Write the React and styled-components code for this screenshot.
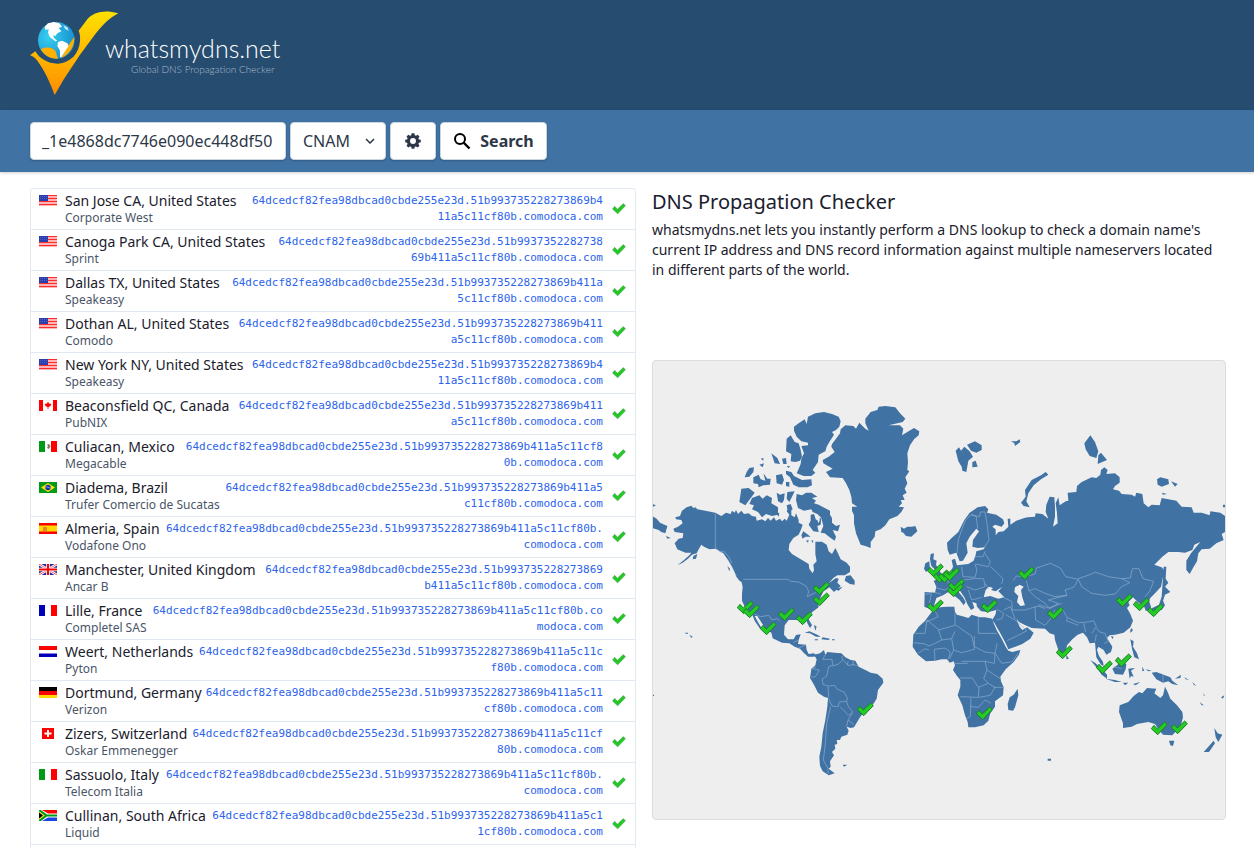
import React, { useState } from 'react';
import styled, { createGlobalStyle } from 'styled-components';

const GlobalStyle = createGlobalStyle`
    *, *::before, *::after { box-sizing: border-box; }
    body {
        margin: 0;
        background: #fff;
        color: #1a202c;
        font-family: "Noto Sans", "Open Sans", sans-serif;
    }
`;

const Page = styled.div`
    display: flex;
    flex-direction: column;
    height: 100vh;
    overflow: hidden;
`;

const Header = styled.header`
    display: flex;
    background: #264c70;
    padding: 11px 30px 15px;
`;

const Brand = styled.a`
    display: flex;
    align-items: flex-start;
    color: #fff;
    text-decoration: none;
    font-family: Lato, sans-serif;
    font-weight: 300;
`;

const BrandText = styled.span`
    display: flex;
    flex-direction: column;
    align-items: flex-end;
    margin: 22px 0 0 -13px;
`;

const BrandName = styled.span`
    font-size: 25px;
    line-height: 30px;
`;

const BrandSub = styled.span`
    font-size: 10px;
    line-height: 12px;
    padding-right: 6px;
    color: #a9bacb;
`;

const Toolbar = styled.form`
    display: flex;
    gap: 4px;
    padding: 12px 30px;
    background: #4072a4;
    box-shadow: 0 1px 3px rgba(0, 0, 0, 0.2);
`;

const field = `
    height: 38px;
    border: 1px solid #cbd5e0;
    border-radius: 4px;
    background: #fff;
    color: #2d3748;
    font-family: inherit;
    font-size: 16px;
    box-shadow: 0 1px 2px rgba(0, 0, 0, 0.2);
`;

const DomainInput = styled.input`
    ${field}
    width: 256px;
    padding: 0 11px;
`;

const SelectBox = styled.div`
    display: grid;
    align-items: center;

    & > * { grid-area: 1 / 1; }
    svg {
        justify-self: end;
        margin-right: 11px;
        pointer-events: none;
    }
`;

const TypeSelect = styled.select`
    ${field}
    width: 96px;
    padding: 0 12px;
    appearance: none;
`;

const Button = styled.button`
    ${field}
    display: flex;
    align-items: center;
    justify-content: center;
    gap: 9px;
    width: ${(props) => props.$width}px;
    padding: 0;
    font-weight: 700;
`;

const Content = styled.main`
    flex: 1;
    min-height: 0;
    display: grid;
    grid-template-columns: minmax(0, 606fr) minmax(0, 574fr);
    gap: 16px;
    padding: 16px 28px 0 30px;
`;

const Results = styled.section`
    border: 1px solid #e2e8f0;
    border-bottom: 0;
    border-radius: 4px 4px 0 0;
    overflow: hidden;
`;

const Table = styled.table`
    display: block;
    tbody { display: block; }
`;

const Tr = styled.tr`
    display: flex;
    padding: 4px 8px;
    border-bottom: 1px solid #e2e8f0;
`;

const FlagCell = styled.td`
    padding: 2px 0 0;
    width: 26px;
    svg { display: block; }
`;

const PlaceCell = styled.td`
    padding: 0;
    flex: 1;
    white-space: nowrap;
`;

const City = styled.div`
    font-size: 14px;
    line-height: 16px;
`;

const Provider = styled.div`
    font-size: 12px;
    line-height: 18px;
    margin-bottom: -2px;
    color: #4a5568;
`;

const ValueCell = styled.td`
    padding: 0;
    text-align: right;
    white-space: nowrap;
    font-family: "DejaVu Sans Mono", monospace;
    font-size: 11px;
    line-height: 16px;
    color: #2b63eb;
`;

const StatusCell = styled.td`
    display: flex;
    align-items: center;
    padding: 0 1px 0 9px;
`;

const Side = styled.section`
    min-width: 0;
`;

const Title = styled.h1`
    margin: 0;
    font-size: 20px;
    line-height: 28px;
    font-weight: 400;
`;

const Intro = styled.p`
    margin: 4px 0 80px;
    font-size: 14px;
    line-height: 20px;
`;

const MapBox = styled.div`
    border: 1px solid #dcdcdc;
    border-radius: 4px;
    background: #eee;
    overflow: hidden;
    svg { display: block; width: 100%; }
`;

const RECORD = '64dcedcf82fea98dbcad0cbde255e23d.51b993735228273869b411a5c11cf80b.comodoca.com';

// tail: how many characters of the record go on the second line
const servers = [
    { flag: 'us', city: 'San Jose CA, United States', provider: 'Corporate West', tail: 25 },
    { flag: 'us', city: 'Canoga Park CA, United States', provider: 'Sprint', tail: 29 },
    { flag: 'us', city: 'Dallas TX, United States', provider: 'Speakeasy', tail: 22 },
    { flag: 'us', city: 'Dothan AL, United States', provider: 'Comodo', tail: 23 },
    { flag: 'us', city: 'New York NY, United States', provider: 'Speakeasy', tail: 25 },
    { flag: 'ca', city: 'Beaconsfield QC, Canada', provider: 'PubNIX', tail: 23 },
    { flag: 'mx', city: 'Culiacan, Mexico', provider: 'Megacable', tail: 15 },
    { flag: 'br', city: 'Diadema, Brazil', provider: 'Trufer Comercio de Sucatas', tail: 21 },
    { flag: 'es', city: 'Almeria, Spain', provider: 'Vodafone Ono', tail: 12 },
    { flag: 'gb', city: 'Manchester, United Kingdom', provider: 'Ancar B', tail: 27 },
    { flag: 'fr', city: 'Lille, France', provider: 'Completel SAS', tail: 10 },
    { flag: 'nl', city: 'Weert, Netherlands', provider: 'Pyton', tail: 17 },
    { flag: 'de', city: 'Dortmund, Germany', provider: 'Verizon', tail: 18 },
    { flag: 'ch', city: 'Zizers, Switzerland', provider: 'Oskar Emmenegger', tail: 16 },
    { flag: 'it', city: 'Sassuolo, Italy', provider: 'Telecom Italia', tail: 12 },
    { flag: 'za', city: 'Cullinan, South Africa', provider: 'Liquid', tail: 19 },
];

const flags = {
    us: (
        <>
            <rect width="18" height="11" fill="#ffb3b3" />
            <path d="M0 .5H18M0 3.5H18M0 6.5H18M0 9.5H18" stroke="#ff2d2d" strokeWidth="1.2" />
            <rect width="9" height="6" fill="#2b3cab" />
            <path d="M1 1.5H9M1 3.5H9" stroke="#6f7bd0" strokeWidth=".6" strokeDasharray="1 1" />
        </>
    ),
    ca: (
        <>
            <rect width="18" height="11" fill="#fff" />
            <path d="M4 .2H14M4 10.800H14" stroke="#ddd" strokeWidth=".5" />
            <path d="M0 0H4V11H0ZM14 0H18V11H14ZM9 1.5L10 3.5L12.5 4L11 6.5L9.4 7V9H8.6V7L7 6.5L5.500 4L8 3.500Z" fill="#f00" />
        </>
    ),
    mx: (
        <>
            <rect width="18" height="11" fill="#fff" />
            <rect width="6" height="11" fill="#009a17" />
            <rect x="12" width="6" height="11" fill="#f00" />
            <path d="M8 3.500L10 3L11.500 5L10 8L8 7L9 5Z" fill="#83795e" />
        </>
    ),
    br: (
        <>
            <rect width="18" height="11" fill="#009a17" />
            <path d="M9 1L16 5.500L9 10L2 5.500Z" fill="#ffe000" />
            <circle cx="9" cy="5.500" r="2.700" fill="#1130b0" />
            <path d="M6.500 5Q9 4.500 11.500 6.300" stroke="#cfe0ff" strokeWidth=".6" fill="none" />
        </>
    ),
    es: (
        <>
            <rect width="18" height="11" fill="#f00" />
            <rect y="2.500" width="18" height="6" fill="#ffd800" />
            <rect x="4" y="4" width="4" height="4" fill="#e58a2a" />
        </>
    ),
    gb: (
        <>
            <rect width="18" height="11" fill="#1a2f9c" />
            <path d="M0 0L18 11M18 0L0 11" stroke="#fff" strokeWidth="2.600" />
            <path d="M0 0L18 11M18 0L0 11" stroke="#f33" strokeWidth=".8" />
            <path d="M9 0V11M0 5.500H18" stroke="#fff" strokeWidth="3.600" />
            <path d="M9 0V11M0 5.500H18" stroke="#f00" strokeWidth="2" />
        </>
    ),
    fr: (
        <>
            <rect width="18" height="11" fill="#fff" />
            <rect width="6" height="11" fill="#0000b8" />
            <rect x="12" width="6" height="11" fill="#f00" />
        </>
    ),
    nl: (
        <>
            <rect width="18" height="11" fill="#fff" />
            <rect width="18" height="4" fill="#f00" />
            <rect y="7.500" width="18" height="3.500" fill="#0000b8" />
        </>
    ),
    de: (
        <>
            <rect width="18" height="4" fill="#000" />
            <rect y="4" width="18" height="4" fill="#f00" />
            <rect y="8" width="18" height="3" fill="#ffd800" />
        </>
    ),
    ch: (
        <>
            <rect x="3" width="12" height="11" fill="#f00" />
            <path d="M9 2V9M5.500 5.500H12.500" stroke="#fff" strokeWidth="2" />
        </>
    ),
    it: (
        <>
            <rect width="18" height="11" fill="#fff" />
            <rect width="6" height="11" fill="#009a17" />
            <rect x="12" width="6" height="11" fill="#f00" />
        </>
    ),
    za: (
        <>
            <rect width="18" height="11" fill="#fff" />
            <path d="M3 0H18V3.600H9Z" fill="#f00" />
            <path d="M3 11H18V7.400H9Z" fill="#1b45e0" />
            <path d="M0 0L7.500 5.500L0 11M7 5.500H18" stroke="#009a17" strokeWidth="2.200" fill="none" />
            <path d="M0 1.500L5.500 5.500L0 9.500Z" fill="#ffd800" />
            <path d="M0 2.500L4 5.500L0 8.500Z" fill="#000" />
        </>
    ),
};

const Flag = ({ code }) => (
    <svg width="18" height="11" viewBox="0 0 18 11" aria-label={code}>
        {flags[code]}
    </svg>
);

const CHECK = 'M-23 2L-15 -8L-5 3L17 -18L25 -10L-4 20Z';

const CheckIcon = () => (
    <svg width="14" height="12" viewBox="-25 -20 52 44" aria-label="resolved">
        <path d={CHECK} fill="#22c922" stroke="#4f9a5a" strokeWidth="2" strokeLinejoin="round" />
    </svg>
);

const markers = [
    [745, 607], [751, 611], [768, 628], [786, 614], [804, 618], [821, 588], [821, 599],
    [865, 709], [935, 570], [941, 576], [946, 576], [951, 574], [956, 585], [955, 590],
    [935, 606], [989, 606], [1026, 573], [1055, 613], [1064, 652], [984, 713],
    [1124, 600], [1141, 604], [1155, 610], [1123, 660], [1104, 667], [1159, 728], [1179, 727],
];

const WorldMap = () => (
    <svg viewBox="0 0 1716 1374" role="img" aria-label="World map of DNS servers">
        {/* north america, greenland, iceland, british isles */}
        <g transform="translate(-3 87)" fill="#4072a4">
            <path d="M70 382L84 378L90 362L104 352L118 347L124 354L130 352L136 358L160 362L190 368L208 378L222 368L236 372L240 362L248 368L252 360L258 372L268 362L276 372L290 370L300 378L312 380L314 392L330 388L340 394L348 384L356 392L366 382L372 392L384 386L390 394L398 386L404 392L412 374L404 364L410 352L418 358L418 376L428 382L432 370L440 390L440 398L452 404L448 416L440 434L424 444L412 462L410 480L420 492L440 504L460 516L470 522L472 536L482 550L486 540L484 524L494 514L490 492L490 472L490 455L510 455L524 464L530 484L540 492L550 474L558 490L566 508L584 518L594 530L594 546L578 556L556 556L544 564L530 580L552 564L560 566L556 578L566 588L546 606L532 592L524 598L514 604L506 622L498 640L500 652L484 664L470 676L470 688L480 706L474 714L466 700L462 686L440 690L410 690L398 706L396 734L408 748L425 748L432 735L446 733L440 750L438 762L462 764L464 780L470 792L486 790L494 798L484 800L468 800L455 788L444 776L428 770L412 760L390 758L362 745L358 728L340 716L326 694L316 678L308 678L320 700L330 716L324 716L308 692L300 672L280 654L270 632L270 612L272 590L268 574L252 556L240 530L228 510L214 490L190 476L172 478L156 470L148 464L140 478L134 490L120 494L108 506L92 518L76 526L96 510L112 496L118 488L100 488L76 478L68 460L80 446L92 444L94 430L68 426L64 416L78 410L92 400L88 390L72 388Z" />
            <path d="M0 378L14 386L24 398L46 408L40 430L28 426L20 420L0 414ZM0 342L12 346L0 352ZM42 438L56 444L46 446ZM124 498L136 492L132 506L122 508ZM226 528L234 536L232 544ZM250 556L262 560L278 574L276 580L262 572Z" />
            <path d="M540 162L552 146L564 130L566 118L580 106L604 108L612 116L622 98L640 116L650 122L640 100L640 86L656 66L676 60L680 50L700 48L730 52L744 70L760 86L752 96L710 106L744 106L754 116L750 136L766 126L786 114L802 124L800 136L786 148L774 166L766 190L768 216L766 240L772 244L760 262L766 280L758 296L764 308L752 316L758 330L746 330L750 340L740 350L756 352L748 366L736 378L712 388L700 406L686 418L670 424L668 440L656 456L656 474L640 468L626 464L612 430L606 400L606 376L600 362L600 350L616 350L600 340L598 320L592 300L582 280L572 264L534 262L522 246L542 236L514 220L512 210L530 200L548 186L538 170Z" />
            <path d="M426 110L440 100L458 88L464 102L468 80L490 70L516 66L540 72L560 80L566 94L562 110L552 120L540 126L546 134L532 156L524 170L520 184L500 194L498 216L482 240L490 248L478 258L455 258L434 250L440 236L446 222L448 206L456 190L448 168L468 166L468 158L448 154L434 140L426 122Z" />
            <path d="M404 146L416 136L428 156L440 160L446 180L450 200L444 212L430 216L416 214L418 192L402 184Z" />
            <path d="M402 242L418 246L426 258L450 270L478 268L480 286L466 292L440 292L424 284L414 262L402 252ZM372 256L390 252L396 270L390 284L374 280ZM358 190L376 204L384 222L368 220ZM390 206L402 204L404 222L394 222ZM402 276L412 276L412 290L402 288ZM322 224L336 220L332 232ZM326 206L334 204L334 212ZM404 228L414 228L410 234Z" />
            <path d="M278 262L284 246L292 234L306 232L304 246L292 260ZM304 262L320 254L326 268L340 272L334 250L346 266L356 266L354 284L334 286L320 292L318 282L304 280ZM268 296L290 294L308 308L298 322L280 346L262 336Z" />
            <path d="M300 324L322 316L332 326L344 316L360 324L358 340L378 352L378 374L360 378L342 372L330 382L318 366L300 358L306 346L292 342ZM374 308L384 314L398 310L396 330L390 340L378 334ZM406 306L428 304L420 320L412 336L404 326ZM404 346L416 342L422 358L408 366ZM372 370L382 368L380 380Z" />
            <path d="M434 312L450 316L462 308L478 308L496 320L480 324L492 332L486 340L500 344L514 352L534 362L534 374L540 384L540 398L552 408L564 404L558 424L542 420L552 440L548 452L536 444L518 430L506 428L514 408L508 384L496 372L482 366L478 358L456 362L438 354L432 330Z" />
            <path d="M476 374L486 372L492 390L508 384L506 404L496 408L500 426L484 424L470 404L476 392ZM454 424L476 440L460 440L452 446L448 436ZM462 452L470 450L468 458ZM478 450L484 452L482 460Z" fill="#4072a4" />
            <path d="M582 558L596 556L608 572L608 584L594 582L578 572ZM548 598L572 590L560 602Z" />
            <path d="M746 410L756 416L766 410L780 410L790 408L796 424L778 440L762 438L754 428L748 426Z" />
            <path d="M836 492L846 490L844 508L854 512L852 524L862 540L870 556L882 562L876 572L850 572L856 560L844 548L850 540L838 528L834 508ZM820 520L832 514L834 536L822 546L816 536Z" />
            <path d="M494 386L504 388L500 400Z" fill="#eee" />
        </g>

        {/* south america, caribbean */}
        <g transform="translate(-3 717)" fill="#4072a4">
            <path d="M486 164L504 160L516 150L520 164L526 156L548 158L568 160L580 172L596 180L610 182L620 200L640 210L656 218L676 222L692 236L694 248L678 270L674 296L664 312L640 330L624 352L606 382L596 384L584 380L590 392L586 404L568 410L564 420L554 420L556 432L548 434L550 446L540 456L546 466L534 484L536 500L530 506L548 520L530 526L512 514L504 498L502 470L508 440L512 400L520 360L526 320L528 294L516 290L498 278L486 254L474 234L476 222L478 206L490 196L494 178Z" />
            <path d="M458 98L472 94L496 104L506 110L492 110L474 100ZM512 112L534 116L530 120L508 118ZM488 118H498V121H488ZM540 118H548V121H540ZM572 494L586 494L576 500ZM112 104L122 110L118 114ZM100 98H108V101H100ZM2 284H6V288H2ZM486 74L494 80L490 92L488 84Z" />
        </g>

        {/* eurasia */}
        <g transform="translate(846 87)" fill="#4072a4">
            <path d="M36 458L50 444L70 426L88 390L104 368L128 352L150 348L160 358L156 368L184 374L204 388L208 400L200 410L180 404L172 410L182 418L182 436L190 426L206 424L220 410L218 386L226 386L226 404L244 392L268 384L278 382L300 380L302 370L322 372L340 386L332 366L334 344L344 320L358 322L360 350L360 380L354 410L368 400L366 370L362 340L370 322L374 346L392 334L400 332L398 308L424 306L426 288L440 276L470 262L484 264L496 254L498 240L508 232L518 240L514 252L540 250L554 262L554 278L540 288L534 298L552 302L560 312L590 314L600 320L604 308L622 312L626 340L640 352L650 344L674 346L680 324L700 328L724 332L740 350L770 352L776 368L800 368L824 376L826 364L856 368L873 380V424L860 432L866 450L844 460L824 476L800 478L790 490L786 514L776 530L764 552L754 540L754 512L768 490L784 470L796 456L778 464L772 480L750 488L730 486L700 486L682 500L658 524L680 532L690 544L684 560L678 590L660 610L646 624L642 632L648 650L644 664L632 662L626 646L612 640L594 622L580 636L584 646L576 654L586 672L594 692L586 712L566 728L540 734L524 736L516 744L532 770L528 786L514 794L506 780L490 770L486 780L492 798L504 816L506 828L498 824L484 802L482 780L480 758L464 760L456 742L444 728L428 734L412 748L396 766L392 788L380 798L368 774L360 750L358 734L344 730L330 716L290 714L268 704L252 696L244 686L254 710L262 720L276 712L296 728L286 746L262 762L220 778L212 760L196 730L178 698L172 690L182 672L184 660L160 666L138 664L126 650L124 640L112 636L118 654L108 660L98 644L88 622L76 604L66 600L84 622L92 636L86 646L74 630L56 616L40 606L24 616L4 624L-4 650L-14 658L-32 650L-31 606L0 608L4 590L-4 572L14 566L30 552L48 544L54 530L50 510L60 506L66 526L80 524L100 522L116 512L122 494L124 484L146 478L150 472L128 474L112 470L114 450L132 424L124 416L104 440L94 460L98 488L84 512L74 514L64 488L44 494L38 480Z" />
            <path d="M62 182L72 172L78 182L88 170L104 184L114 200L100 212L94 246L82 242L80 230L70 214ZM96 164L120 154L140 166L140 180L124 188L108 182ZM112 216L122 212L128 230L112 232ZM228 154L244 154L254 148L256 156L240 168L238 160ZM448 160L466 136L480 156L490 184L484 204L464 198L452 178ZM490 196L498 188L516 210L488 222ZM666 268L676 262L700 268L702 282L680 290L668 284ZM708 274L728 282L720 290ZM680 308L696 312L684 314ZM864 344H873V352H864Z" />
            <path d="M258 338L272 320L270 300L290 270L318 256L332 246L340 254L318 268L296 286L280 310L274 334L284 352L266 348Z" />
            <path d="M686 530L694 530L692 566L700 578L690 590L706 606L690 614L684 632L690 646L680 660L656 664L640 670L652 654L672 644L680 620L682 590ZM588 714L594 720L586 728ZM528 738L536 740L532 748ZM394 794L402 806L394 808Z" />
            {/* black sea and caspian */}
            <path d="M146 622L152 600L162 590L174 594L168 600L182 604L202 590L190 604L208 622L190 626L166 618ZM240 592L254 584L266 590L258 600L262 622L270 646L256 648L246 636L250 618L238 606Z" fill="#eee" />
        </g>

        {/* africa, south east asia, australia */}
        <g transform="translate(846 717)" fill="#4072a4">
            <path d="M-13 40L-31 64L-49 80L-65 104L-67 140L-51 164L-27 184L0 182L20 178L36 178L44 188L56 184L60 196L54 210L66 228L76 240L76 260L68 286L82 316L90 346L98 366L100 382L120 382L146 376L160 362L166 340L180 320L180 304L204 286L206 262L198 244L196 230L212 208L236 186L252 164L256 150L232 156L220 152L212 140L200 116L186 92L176 70L172 56L150 52L134 52L110 44L100 54L88 50L66 44L60 36L58 20L36 20L16 22L0 26Z" />
            <path d="M248 266L250 286L240 322L234 332L220 330L218 312L224 292L236 284ZM466 180L480 188L500 206L516 224L516 236L500 224L484 202ZM512 236L540 240L560 246L540 246ZM532 206L546 196L560 184L574 192L572 208L564 224L540 222ZM580 206L600 204L588 212L596 230L588 228L584 236ZM564 248L580 248L570 256ZM594 252L616 246L602 256ZM586 118L596 124L594 140L606 160L612 178L598 172L592 150ZM622 200L628 212L622 214ZM632 208L650 212L640 214ZM588 86L592 92L586 98Z" />
            <path d="M650 218L664 216L680 222L706 232L712 242L730 256L712 252L700 244L684 248L664 238ZM720 236L738 224L736 234ZM748 232L762 240L752 238ZM772 246L784 258L776 254ZM794 306L806 316L800 316ZM858 292L868 286L864 296ZM806 280L810 288L806 286ZM338 476H348V482H338Z" />
            <path d="M554 316L580 306L596 288L612 276L622 280L636 264L664 266L658 280L676 294L684 286L690 260L698 276L706 296L726 316L742 336L744 352L738 374L726 390L712 406L684 404L672 390L660 372L640 366L606 372L590 380L564 384L564 370L552 336ZM702 422L718 422L714 438L706 436ZM838 384L848 400L862 404L850 426L842 412ZM836 422L840 430L822 456L806 456L820 440Z" />
        </g>

        {/* country borders */}
        <g fill="none" stroke="#8fafce" strokeWidth="2">
            <path transform="translate(-3 87)" d="M190 370V474L206 486L214 482L230 500L240 520M274 568H408L416 574L440 576L462 588L470 604L466 620L486 610L506 596L520 592M298 668L326 680L350 676L360 690L376 686L384 694M818 612L838 612L832 640M840 606L868 612" />
            <path transform="translate(-3 717)" d="M424 128L438 120M440 144L462 134M520 164L512 178L540 178L542 196L530 200L524 228L510 238L514 254L528 258L530 292M480 206L502 210L490 230L478 232M542 198L560 192L572 180L570 168M574 180L588 196L606 194L616 198M588 184L586 196M604 184L602 196M530 258L548 256L556 268L576 276L586 294L584 304L562 306L558 320L540 318L530 296M584 304L588 318L602 336L590 346L564 320M602 338L588 360L584 380M588 360L606 374M536 320L524 370L520 430L514 480L528 506L528 522M478 206L492 200" />
            <path transform="translate(846 87)" d="M66 490L70 450L80 420L92 390L108 374L124 380L128 416M108 374L134 380L136 366L150 366L156 400L162 450L148 472M150 484L144 500L120 500M150 490L166 516L160 530L122 522M80 530L84 560L120 562L126 540L120 522M166 530L184 546L204 566L200 582M86 570L120 566L146 566L150 590L120 600L94 590M150 580L160 596M100 600L110 630L140 622M4 594L30 600L50 590L80 590M36 560L40 580M234 572L244 558L270 560L300 552L304 534L346 520L376 534L392 560L430 568L416 592L390 600L396 616L360 620L330 610L300 596L282 602L274 572M430 566L470 552L480 546L520 560L560 566L584 578L560 590L540 612L510 616L470 610L440 590L430 568M560 566L586 564L592 536L612 536L624 566L656 574L644 604L630 620M282 602L300 620L330 640L344 656L370 640L340 630L396 616M200 620L230 634L232 660L270 660L310 648L330 656" />
            <path transform="translate(846 717)" d="M310 14L340 24L380 10M300 20L302 60L330 76L344 60L360 30M384 30L396 52L430 68L460 66L476 62L484 80L470 100M396 54L394 62L430 76M446 70L452 96M484 84L494 96L510 100L520 124L508 130M484 104L480 124M186 28L206 40L200 56L184 60M206 30L226 20L240 56M212 44L240 60L276 92L250 106L216 122M130 52V100L186 100M60 38V74L110 108L118 140M-29 66L-12 60L10 50L-2 30M-60 100L-30 100L-24 60L10 88L20 120M10 90L60 76M-64 128L-30 132L-18 138L0 130L20 120L50 116L60 94M-50 160L-30 146L-18 150M0 182L-2 148L30 144L46 156L40 178M50 116L56 150L44 176M118 108V148L80 158L56 150M118 140L150 156L180 160L186 130M180 160L200 190L230 186L250 160M100 184L150 184L156 210L146 236L160 250L130 262L112 234L76 234M80 184L100 184M60 190L98 190M156 210L196 236M150 184L178 190L180 160M76 290L130 292L132 262M108 294L106 350L94 356M106 320L130 322L150 300L168 310M132 292L166 286L180 262L160 250M146 340L154 342M176 262L204 262M684 222V246M536 200L560 206" />
        </g>

        {markers.map(([x, y]) => (
            <path
                key={`${x}-${y}`}
                d={CHECK}
                transform={`translate(${(x - 653) * 3} ${(y - 361) * 3})`}
                fill="#22cc22"
                stroke="#1f7a30"
                strokeWidth="3"
                strokeLinejoin="round"
            />
        ))}
    </svg>
);

const Logo = () => (
    <svg width="88" height="84" viewBox="90 33 264 252" aria-hidden="true">
        <defs>
            <linearGradient id="tick" x1="0" y1="0" x2="0" y2="1">
                <stop offset="0" stopColor="#ffe000" />
                <stop offset=".5" stopColor="#ffb900" />
                <stop offset="1" stopColor="#ff8c00" />
            </linearGradient>
            <radialGradient id="sea" cx=".3" cy=".4" r=".8">
                <stop offset="0" stopColor="#37d0f2" />
                <stop offset="1" stopColor="#1387c9" />
            </radialGradient>
        </defs>
        <path d="M90 166L106 154C118 176 145 192 174 191C212 188 238 160 240 122C241 108 239 98 236 92L262 58C280 38 310 28 355 40C330 52 310 72 286 102L240 164L190 240L164 285C150 245 130 205 112 182C104 172 98 168 90 166Z" fill="url(#tick)" />
        <circle cx="169" cy="121" r="55" fill="url(#sea)" />
        <path d="M122 148C136 140 154 140 166 152L174 176C152 178 132 166 122 148Z" fill="#ffb000" />
        <path d="M223 110C224 136 212 160 184 174L196 150Z" fill="#ffb000" />
        <path d="M134 80L144 70L162 66L178 70L186 80L176 84L184 94L172 100L166 108L158 106L164 116L172 122L166 124L150 112L144 98L146 88L136 90Z" fill="#fff" />
        <path d="M174 126L186 122L202 130L206 138L196 152L184 172L180 172L180 152L172 138Z" fill="#fff" />
        <path d="M190 76L202 82L206 92L196 88Z" fill="#bfeefa" />
    </svg>
);

const GearIcon = () => (
    <svg width="18" height="18" viewBox="0 0 20 20" aria-hidden="true">
        <path
            fill="#2d3748"
            fillRule="evenodd"
            d="M8.500 1.500h3l.5 2.200 1.300.5 1.900-1.200 2 2-1.200 1.900.5 1.300 2.200.5v2.800l-2.200.5-.5 1.300 1.200 1.900-2 2-1.900-1.200-1.300.5-.5 2.200h-3l-.5-2.200-1.300-.5-1.900 1.200-2-2 1.200-1.900-.5-1.300-2.200-.5V8.700l2.200-.5.5-1.300L2.800 5l2-2 1.900 1.200 1.300-.5zM10 6.800a3.300 3.300 0 1 0 0 6.600 3.300 3.300 0 0 0 0-6.600z"
        />
    </svg>
);

const SearchIcon = () => (
    <svg width="18" height="18" viewBox="0 0 18 18" fill="none" stroke="#000" strokeWidth="2" aria-hidden="true">
        <circle cx="7" cy="7" r="5" />
        <path d="M10.500 10.500L16.500 16.500" strokeWidth="2.400" />
    </svg>
);

const ChevronIcon = () => (
    <svg width="10" height="6" viewBox="0 0 10 6" fill="none" stroke="#2d3748" strokeWidth="1.500" aria-hidden="true">
        <path d="M1 1L5 5L9 1" />
    </svg>
);

const App = () => {
    const [domain, setDomain] = useState('_1e4868dc7746e090ec448df50');
    const [type, setType] = useState('CNAME');

    function submit(e) {
        e.preventDefault();
    }

    return (
        <Page>
            <GlobalStyle />
            <Header>
                <Brand href="/">
                    <Logo />
                    <BrandText>
                        <BrandName>whatsmydns.net</BrandName>
                        <BrandSub>Global DNS Propagation Checker</BrandSub>
                    </BrandText>
                </Brand>
            </Header>
            <Toolbar onSubmit={submit}>
                <DomainInput aria-label="Domain" value={domain} onChange={(e) => setDomain(e.target.value)} />
                <SelectBox>
                    <TypeSelect aria-label="Record type" value={type} onChange={(e) => setType(e.target.value)}>
                        <option value="CNAME">CNAM</option>
                    </TypeSelect>
                    <ChevronIcon />
                </SelectBox>
                <Button type="button" $width={46} aria-label="Settings">
                    <GearIcon />
                </Button>
                <Button type="submit" $width={107}>
                    <SearchIcon />
                    Search
                </Button>
            </Toolbar>
            <Content>
                <Results>
                    <Table>
                        <tbody>
                            {servers.map((s) => (
                                <Tr key={s.city}>
                                    <FlagCell><Flag code={s.flag} /></FlagCell>
                                    <PlaceCell>
                                        <City>{s.city}</City>
                                        <Provider>{s.provider}</Provider>
                                    </PlaceCell>
                                    <ValueCell>
                                        {RECORD.slice(0, -s.tail)}
                                        <br />
                                        {RECORD.slice(-s.tail)}
                                    </ValueCell>
                                    <StatusCell><CheckIcon /></StatusCell>
                                </Tr>
                            ))}
                        </tbody>
                    </Table>
                </Results>
                <Side>
                    <Title>DNS Propagation Checker</Title>
                    <Intro>
                        whatsmydns.net lets you instantly perform a DNS lookup to check a domain name's
                        current IP address and DNS record information against multiple nameservers located
                        in different parts of the world.
                    </Intro>
                    <MapBox>
                        <WorldMap />
                    </MapBox>
                </Side>
            </Content>
        </Page>
    );
};

export default App;
